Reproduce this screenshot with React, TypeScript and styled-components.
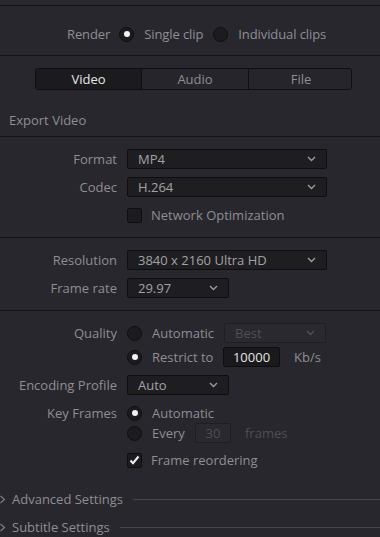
import React from 'react';
import styled, { createGlobalStyle } from 'styled-components';

const GlobalStyle = createGlobalStyle`
  html, body {
    margin: 0;
    padding: 0;
    background: #28272d;
  }
  * {
    box-sizing: border-box;
  }
`;

const Page = styled.div`
  width: 380px;
  height: 537px;
  overflow: hidden;
  background: #28272d;
  font-family: 'Open Sans', 'Noto Sans', sans-serif;
  font-size: 13px;
  color: #8e8e94;
  padding-top: 5px;
`;

const Rule = styled.div`
  height: 1px;
  background: #141417;
`;

const RenderRow = styled.div`
  display: flex;
  align-items: center;
  height: 20px;
  margin: 18px 0 11px;
  padding-left: 67px;
  letter-spacing: -0.1px;
`;

const RenderLabel = styled.span`
  margin-right: 9px;
`;

const Radio = styled.span<{ $on?: boolean }>`
  position: relative;
  flex: none;
  width: 15px;
  height: 15px;
  border-radius: 50%;
  background: #1c1c1f;
  border: 1px solid #0e0e10;

  &::after {
    content: '';
    display: ${(p) => (p.$on ? 'block' : 'none')};
    position: absolute;
    left: 3.5px;
    top: 3.5px;
    width: 6px;
    height: 6px;
    border-radius: 50%;
    background: #f2f2f2;
  }
`;

const RadioText = styled.span<{ $w?: number }>`
  margin-left: 10px;
  margin-right: 10px;
  white-space: nowrap;
  ${(p) => (p.$w ? `width: ${p.$w}px; margin-right: 0;` : '')}
`;

const Tabs = styled.div`
  display: grid;
  grid-template-columns: 105px 107px 105px;
  width: 317px;
  height: 22px;
  margin: 12px 0 0 35px;
  border: 1px solid #0f0f11;
  border-radius: 3px;
  overflow: hidden;
  background: #28272d;
`;

const Tab = styled.div<{ $active?: boolean }>`
  display: flex;
  align-items: center;
  justify-content: center;
  background: ${(p) => (p.$active ? '#1b1b1e' : '#26252b')};
  color: ${(p) => (p.$active ? '#e6e6e6' : '#8e8e94')};
  & + & {
    border-left: 1px solid #0f0f11;
  }
`;

const SectionTitle = styled.div`
  height: 20px;
  line-height: 20px;
  margin: 20px 0 6px 9px;
`;

const Section = styled.div<{ $pb?: number }>`
  padding: 12px 0 ${(p) => p.$pb ?? 12}px;
`;

const Row = styled.div<{ $mt?: number }>`
  display: grid;
  grid-template-columns: 117px 1fr;
  column-gap: 10px;
  height: 20px;
  align-items: center;
  margin-top: ${(p) => p.$mt ?? 0}px;
`;

const Label = styled.span`
  text-align: right;
  white-space: nowrap;
`;

const Controls = styled.div`
  display: flex;
  align-items: center;
`;

const Select = styled.div<{ $w: number; $disabled?: boolean }>`
  display: flex;
  align-items: center;
  justify-content: space-between;
  width: ${(p) => p.$w}px;
  height: 20px;
  padding: 0 10px 0 10px;
  background: ${(p) => (p.$disabled ? '#2a292f' : '#1e1e21')};
  border: 1px solid ${(p) => (p.$disabled ? '#1f1f23' : '#0e0e10')};
  border-radius: 2px;
  color: ${(p) => (p.$disabled ? '#4f4f55' : '#a2a2a6')};
  flex: none;
`;

const NumberBox = styled.div<{ $w: number; $disabled?: boolean }>`
  display: flex;
  align-items: center;
  justify-content: center;
  width: ${(p) => p.$w}px;
  height: 20px;
  background: ${(p) => (p.$disabled ? '#2a292f' : '#1a1a1c')};
  border: 1px solid ${(p) => (p.$disabled ? '#1f1f23' : '#0e0e10')};
  border-radius: 2px;
  color: ${(p) => (p.$disabled ? '#4f4f55' : '#e4e4e4')};
  flex: none;
`;

const Unit = styled.span<{ $dim?: boolean }>`
  margin-left: 14px;
  color: ${(p) => (p.$dim ? '#4f4f55' : '#8e8e94')};
`;

const Check = styled.span`
  display: flex;
  align-items: center;
  justify-content: center;
  width: 15px;
  height: 15px;
  background: #1c1c1f;
  border: 1px solid #0e0e10;
  border-radius: 2px;
  flex: none;
`;

const CheckText = styled.span`
  margin-left: 9px;
`;

const Collapsible = styled.div<{ $mt: number }>`
  display: flex;
  align-items: center;
  height: 20px;
  margin-top: ${(p) => p.$mt}px;
`;

const CollapsibleTitle = styled.span`
  margin: 0 10px 0 6px;
  white-space: nowrap;
`;

const CollapsibleLine = styled.div`
  flex: 1;
  height: 1px;
  background: #45454b;
`;

const Chevron = ({ color = '#9a9aa0' }: { color?: string }) => (
  <svg width="9" height="6" viewBox="0 0 9 6">
    <path d="M1 1 L4.5 4.5 L8 1" fill="none" stroke={color} strokeWidth="1.4" />
  </svg>
);

const SideChevron = () => (
  <svg width="6" height="9" viewBox="0 0 6 9">
    <path d="M0.5 1 L4.5 4.5 L0.5 8" fill="none" stroke="#7c7c82" strokeWidth="1.2" />
  </svg>
);

const Tick = () => (
  <svg width="11" height="10" viewBox="0 0 11 10">
    <path d="M1.5 5.5 L4 8.2 L9.5 1.5" fill="none" stroke="#f2f2f2" strokeWidth="2" />
  </svg>
);

const Dropdown = ({ w, value, disabled }: { w: number; value: string; disabled?: boolean }) => (
  <Select $w={w} $disabled={disabled}>
    <span>{value}</span>
    <Chevron color={disabled ? '#4f4f55' : '#9a9aa0'} />
  </Select>
);

const App: React.FC = () => {
  return (
    <>
      <GlobalStyle />
      <Page>
        <Rule />
        <RenderRow>
          <RenderLabel>Render</RenderLabel>
          <Radio $on />
          <RadioText>Single clip</RadioText>
          <Radio />
          <RadioText>Individual clips</RadioText>
        </RenderRow>
        <Rule />

        <Tabs>
          <Tab $active>Video</Tab>
          <Tab>Audio</Tab>
          <Tab>File</Tab>
        </Tabs>

        <SectionTitle>Export Video</SectionTitle>
        <Rule />

        <Section>
          <Row>
            <Label>Format</Label>
            <Controls>
              <Dropdown w={200} value="MP4" />
            </Controls>
          </Row>
          <Row $mt={8}>
            <Label>Codec</Label>
            <Controls>
              <Dropdown w={200} value="H.264" />
            </Controls>
          </Row>
          <Row $mt={8}>
            <Label />
            <Controls>
              <Check />
              <CheckText>Network Optimization</CheckText>
            </Controls>
          </Row>
        </Section>
        <Rule />

        <Section>
          <Row>
            <Label>Resolution</Label>
            <Controls>
              <Dropdown w={200} value="3840 x 2160 Ultra HD" />
            </Controls>
          </Row>
          <Row $mt={8}>
            <Label>Frame rate</Label>
            <Controls>
              <Dropdown w={102} value="29.97" />
            </Controls>
          </Row>
        </Section>
        <Rule />

        <Section $pb={0}>
          <Row>
            <Label>Quality</Label>
            <Controls>
              <Radio />
              <RadioText $w={72}>Automatic</RadioText>
              <Dropdown w={102} value="Best" disabled />
            </Controls>
          </Row>
          <Row $mt={4}>
            <Label />
            <Controls>
              <Radio $on />
              <RadioText $w={71}>Restrict to</RadioText>
              <NumberBox $w={57}>10000</NumberBox>
              <Unit>Kb/s</Unit>
            </Controls>
          </Row>
          <Row $mt={8}>
            <Label>Encoding Profile</Label>
            <Controls>
              <Dropdown w={102} value="Auto" />
            </Controls>
          </Row>
          <Row $mt={8}>
            <Label>Key Frames</Label>
            <Controls>
              <Radio $on />
              <RadioText>Automatic</RadioText>
            </Controls>
          </Row>
          <Row>
            <Label />
            <Controls>
              <Radio />
              <RadioText $w={43}>Every</RadioText>
              <NumberBox $w={36} $disabled>30</NumberBox>
              <Unit $dim>frames</Unit>
            </Controls>
          </Row>
          <Row $mt={7}>
            <Label />
            <Controls>
              <Check>
                <Tick />
              </Check>
              <CheckText>Frame reordering</CheckText>
            </Controls>
          </Row>
        </Section>

        <Collapsible $mt={19}>
          <SideChevron />
          <CollapsibleTitle>Advanced Settings</CollapsibleTitle>
          <CollapsibleLine />
        </Collapsible>
        <Collapsible $mt={8}>
          <SideChevron />
          <CollapsibleTitle>Subtitle Settings</CollapsibleTitle>
          <CollapsibleLine />
        </Collapsible>
      </Page>
    </>
  );
};

export default App;
